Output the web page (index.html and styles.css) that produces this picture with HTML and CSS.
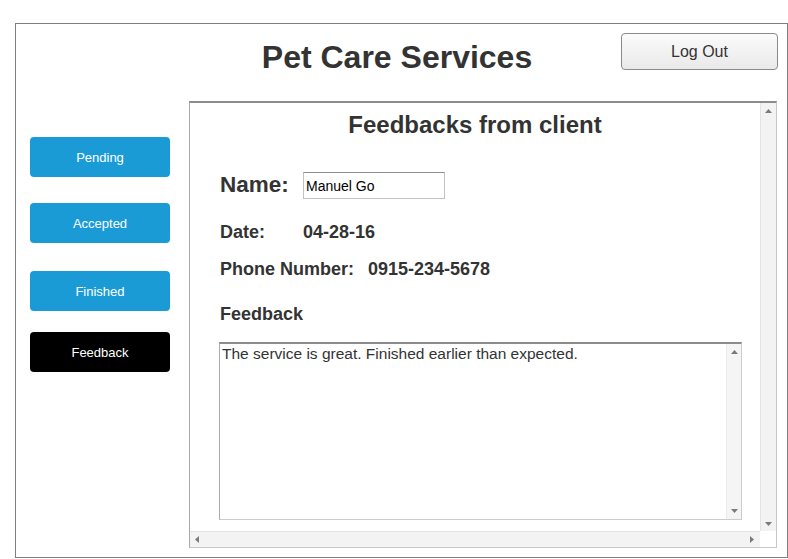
FILE: index.html
```html
<!DOCTYPE html>
<html lang="en">
<head>
<meta charset="utf-8">
<title>Pet Care Services</title>
<link rel="stylesheet" href="styles.css">
</head>
<body>
<div class="frame">
  <header class="top">
    <div class="top-spacer"></div>
    <h1 class="title">Pet Care Services</h1>
    <button class="logout">Log Out</button>
  </header>
  <div class="main">
    <nav class="side">
      <button class="nav nav-pending">Pending</button>
      <button class="nav nav-accepted">Accepted</button>
      <button class="nav nav-finished">Finished</button>
      <button class="nav nav-feedback">Feedback</button>
    </nav>
    <section class="panel">
      <div class="content">
        <h2 class="heading">Feedbacks from client</h2>
        <div class="row row-name">
          <span class="label label-name">Name:</span>
          <input class="name-input" type="text" value="Manuel Go">
        </div>
        <div class="row row-date">
          <span class="label label-fixed">Date:</span>
          <span class="value">04-28-16</span>
        </div>
        <div class="row row-phone">
          <span class="label">Phone Number:</span>
          <span class="value">0915-234-5678</span>
        </div>
        <div class="row row-fb">
          <span class="label">Feedback</span>
        </div>
        <div class="fbbox">
          <div class="fbtext">The service is great. Finished earlier than expected.</div>
          <div class="fbscroll">
            <svg class="arrow" width="7" height="4" viewBox="0 0 7 4"><polygon points="0,4 7,4 3.5,0" /></svg>
            <svg class="arrow" width="7" height="4" viewBox="0 0 7 4"><polygon points="0,0 7,0 3.5,4" /></svg>
          </div>
        </div>
      </div>
      <div class="vbar">
        <svg class="arrow" width="7" height="4" viewBox="0 0 7 4"><polygon points="0,4 7,4 3.5,0" /></svg>
        <svg class="arrow" width="7" height="4" viewBox="0 0 7 4"><polygon points="0,0 7,0 3.5,4" /></svg>
      </div>
      <div class="hbar">
        <svg class="arrow" width="4" height="7" viewBox="0 0 4 7"><polygon points="4,0 4,7 0,3.5" /></svg>
        <svg class="arrow" width="4" height="7" viewBox="0 0 4 7"><polygon points="0,0 0,7 4,3.5" /></svg>
      </div>
      <div class="corner"></div>
    </section>
  </div>
</div>
</body>
</html>
```

FILE: styles.css
```css
* { box-sizing: border-box; }

body {
  margin: 0;
  background: #ffffff;
  font-family: "Liberation Sans", Arial, sans-serif;
  color: #333333;
}

.frame {
  margin: 23px 0 0 15px;
  width: 773px;
  height: 535px;
  border: 1px solid #7f7f7f;
  display: flex;
  flex-direction: column;
}

.top {
  height: 77px;
  flex: none;
  display: grid;
  grid-template-columns: 1fr auto 1fr;
  align-items: start;
  padding: 9px 9px 0 0;
}

.title {
  margin: 6px 0 0 0;
  font-size: 32px;
  line-height: 37px;
  font-weight: bold;
  color: #333333;
}

.logout {
  justify-self: end;
  width: 157px;
  height: 37px;
  border: 1px solid #8a8a8a;
  border-radius: 4px;
  background: linear-gradient(#fbfbfb, #e9e9e9);
  font-family: "Liberation Sans", Arial, sans-serif;
  font-size: 16px;
  color: #333333;
  padding: 0;
}

.main {
  flex: 1;
  display: flex;
  padding: 0 10px 8px 14px;
  gap: 19px;
}

.side {
  width: 140px;
  flex: none;
  display: flex;
  flex-direction: column;
}

.nav {
  width: 140px;
  height: 40px;
  border: none;
  border-radius: 4px;
  background: #1b9bd6;
  color: #ffffff;
  font-family: "Liberation Sans", Arial, sans-serif;
  font-size: 13px;
  padding: 0;
}

.nav-pending { margin-top: 36px; }
.nav-accepted { margin-top: 26px; }
.nav-finished { margin-top: 28px; }
.nav-feedback { margin-top: 21px; background: #000000; }

.panel {
  flex: 1;
  height: 447px;
  border-top: 2px solid #8c8c8c;
  border-left: 1px solid #a9a9a9;
  border-right: 1px solid #c8c8c8;
  border-bottom: 1px solid #c8c8c8;
  display: grid;
  grid-template-columns: 1fr 16px;
  grid-template-rows: 1fr 16px;
}

.content {
  overflow: hidden;
  padding: 8px 0 0 29px;
  display: flex;
  flex-direction: column;
  align-items: flex-start;
}

.heading {
  align-self: stretch;
  margin: 0 0 0 -29px;
  text-align: center;
  font-size: 24px;
  line-height: 28px;
  font-weight: bold;
  color: #333333;
}

.row {
  display: flex;
  align-items: center;
  padding-left: 1px;
  font-size: 18px;
  line-height: 22px;
  font-weight: bold;
  color: #333333;
}

.row-name { margin-top: 33px; height: 27px; }
.row-date { margin-top: 22px; }
.row-phone { margin-top: 15px; gap: 14px; }
.row-fb { margin-top: 23px; }

.label-name {
  width: 83px;
  font-size: 22.5px;
  line-height: 27px;
  margin-top: -3px;
}

.label-fixed { width: 83px; }

.name-input {
  width: 142px;
  height: 27px;
  border: 1px solid #c2c2c2;
  border-top-color: #8e8e8e;
  padding: 0 2px;
  font-family: "Liberation Sans", Arial, sans-serif;
  font-size: 14px;
  color: #000000;
  background: #ffffff;
  outline: none;
}

.fbbox {
  margin-top: 17px;
  width: 523px;
  height: 178px;
  border-top: 2px solid #8c8c8c;
  border-left: 1px solid #aaaaaa;
  border-right: 1px solid #cccccc;
  border-bottom: 1px solid #cccccc;
  display: grid;
  grid-template-columns: 1fr 15px;
}

.fbtext {
  padding: 1px 2px 0;
  font-size: 15.5px;
  line-height: 18px;
  color: #333333;
}

.fbscroll {
  background: #f5f5f5;
  border-left: 1px solid #ebebeb;
  display: flex;
  flex-direction: column;
  justify-content: space-between;
  align-items: center;
  padding: 6px 0;
}

.arrow { display: block; fill: #7a7a7a; }

.vbar {
  background: #f3f3f3;
  border-left: 1px solid #e3e3e3;
  display: flex;
  flex-direction: column;
  justify-content: space-between;
  align-items: center;
  padding: 6px 0 5px;
}

.hbar {
  background: #f3f3f3;
  border-top: 1px solid #e3e3e3;
  display: flex;
  justify-content: space-between;
  align-items: center;
  padding: 0 6px 0 5px;
}

.corner { background: #ffffff; }
```
